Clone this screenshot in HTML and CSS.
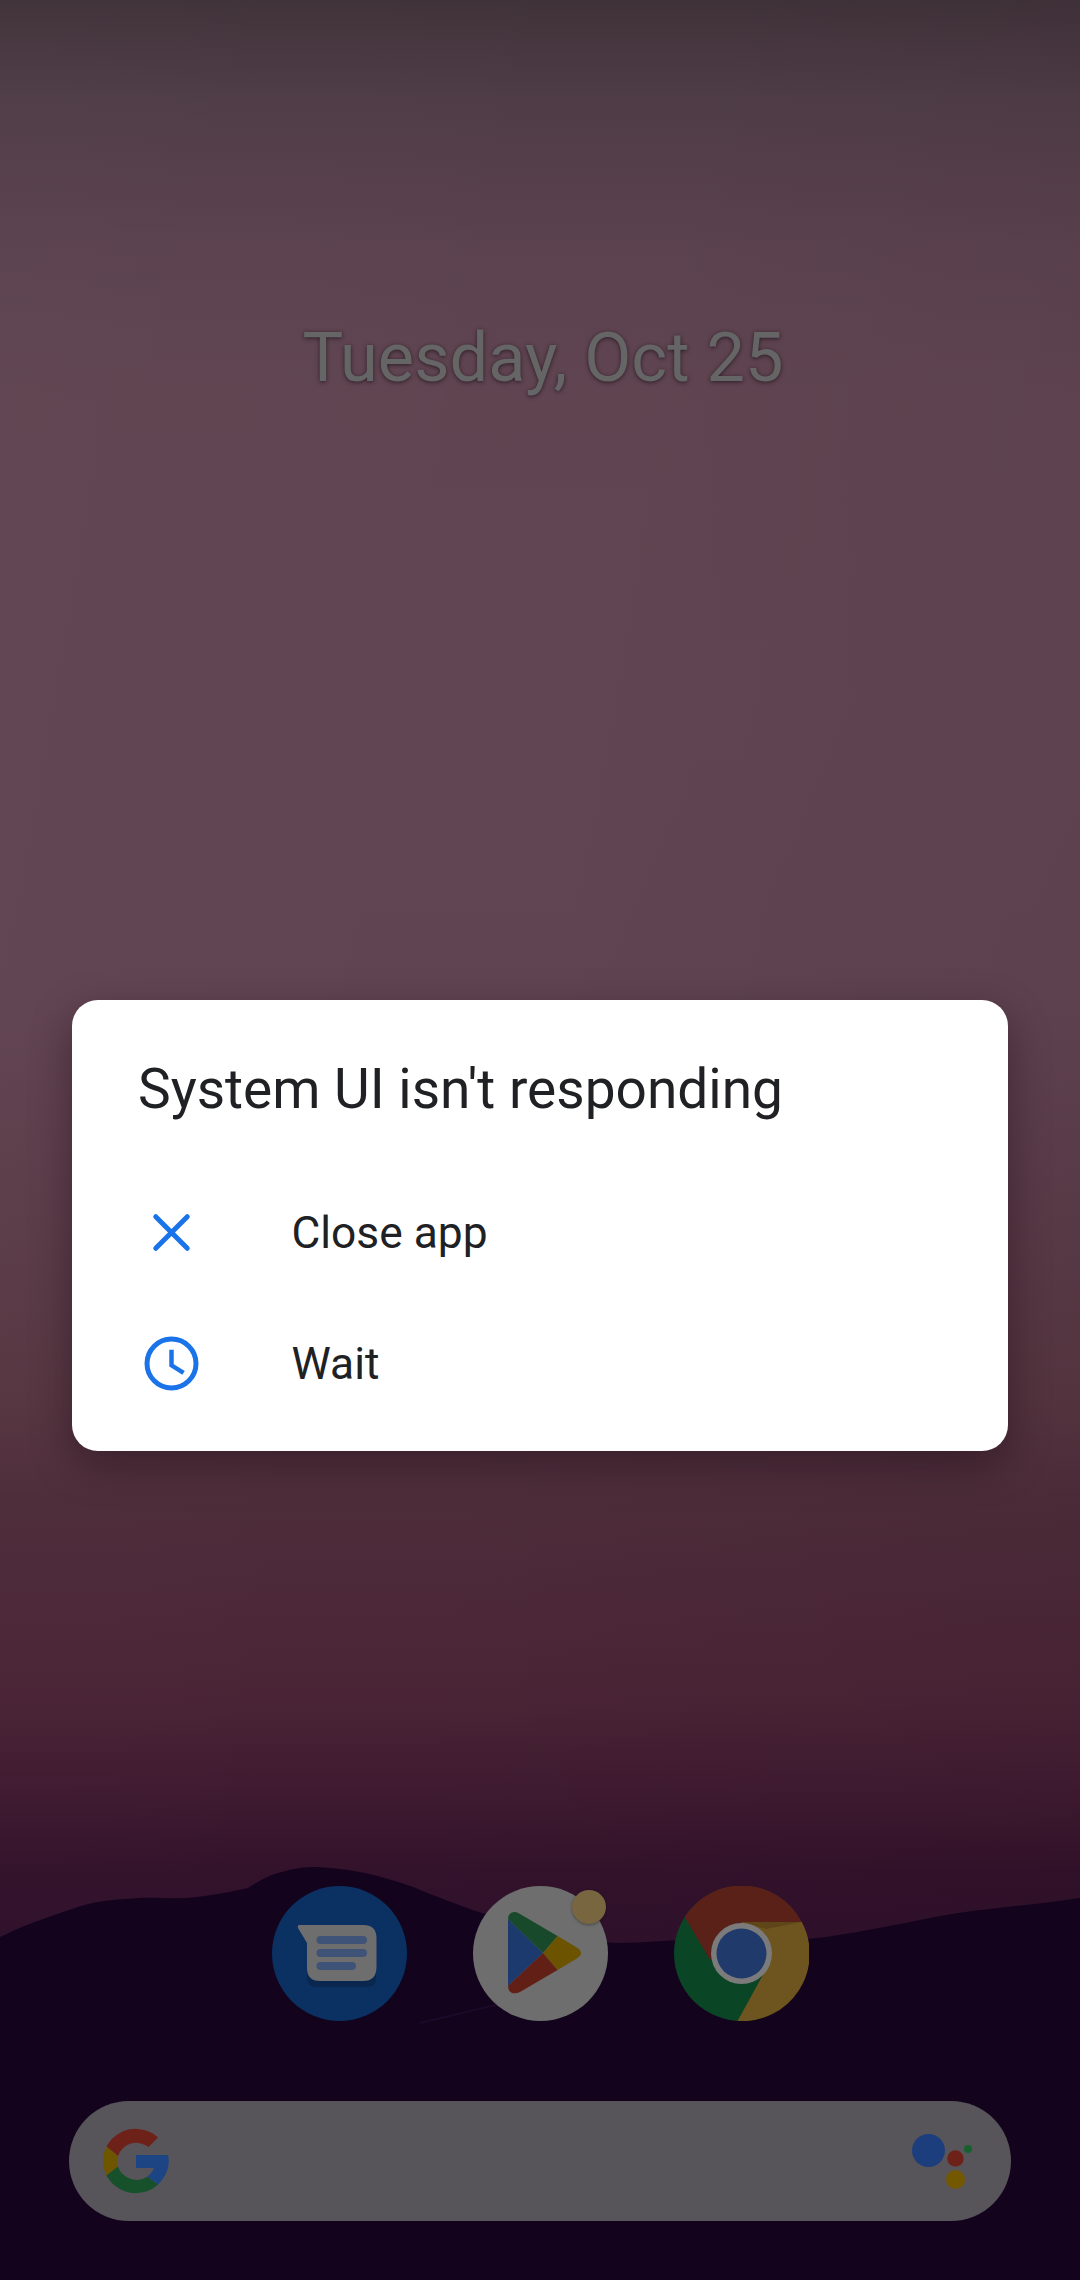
FILE: index.html
```html
<!DOCTYPE html>
<html lang="en">
<head>
<meta charset="utf-8">
<title>System UI isn't responding</title>
<link rel="stylesheet" href="styles.css">
</head>
<body>
<main class="screen">
  <svg class="mountains" viewBox="0 -10 1080 420" aria-hidden="true">
    <path class="mountain-fill" d="M0 67 C25 55 45 48 69 40 C95 30 115 30 138 28 C155 27 170 29 186 28 C210 26 230 22 248 18 C260 10 272 4 282 2 C295 -2 305 -3 317 -3 C335 -2 350 0 365 3 C385 8 400 12 413 17 C435 26 460 36 482 43 C505 50 530 56 551 60 C575 65 600 73 620 73 C645 73 665 70 689 70 C730 69 790 72 826 67 C860 62 895 55 930 48 C980 38 1030 36 1080 28 L1080 420 L0 420 Z"/>
    <path class="ridge" d="M420 153 C445 147 475 140 504 133"/>
  </svg>

  <p class="date">Tuesday, Oct 25</p>

  <section class="dialog">
    <h1 class="dialog-title">System UI isn't responding</h1>
    <div class="dialog-row">
      <svg class="dialog-icon" viewBox="0 0 24 24"><path class="stroke-icon" d="M6 6 18 18M18 6 6 18"/></svg>
      <span class="dialog-label">Close app</span>
    </div>
    <div class="dialog-row">
      <svg class="dialog-icon" viewBox="0 0 24 24"><circle class="clock-ring" cx="12" cy="12" r="9.330"/><path class="clock-hands" d="M12 6.800V12.700L16.600 15.600"/></svg>
      <span class="dialog-label">Wait</span>
    </div>
  </section>

  <div class="dock">
    <svg class="app" viewBox="0 0 135 135" aria-label="Messages">
      <circle class="msg-bg" cx="67.5" cy="67.5" r="67.5"/>
      <path class="msg-shadow" d="M35 45H104V93Q104 101 94 101H45Q35 101 35 91Z"/>
      <path class="msg-bubble" d="M27 39H91Q104.500 39 104.500 52V81Q104.500 95 91 95H48Q35 95 35 82V57L26 42Q25.500 39 27 39Z"/>
      <rect class="msg-line" x="44.500" y="50" width="50.500" height="8" rx="4"/>
      <rect class="msg-line" x="44.500" y="63" width="50.500" height="8" rx="4"/>
      <rect class="msg-line" x="44.500" y="76" width="39.500" height="8" rx="4"/>
    </svg>
    <div class="app-wrap">
      <svg class="app" viewBox="0 0 135 135" aria-label="Play Store">
        <circle class="play-bg" cx="67.500" cy="67.500" r="67.500"/>
        <g transform="translate(1 0)">
          <path class="play-blue" d="M34 33V100L69 67Z"/>
          <path class="play-green" d="M34 33Q34 28 38 26.500Q42 25 46 28L83.500 50L69 67Z"/>
          <path class="play-yellow" d="M83.500 50L102 61Q107 64 107 67Q107 70 102 73L83.500 84L69 67Z"/>
          <path class="play-red" d="M34 100Q34 105 38 107Q42 108 46 106L83.500 84L69 67Z"/>
        </g>
      </svg>
      <span class="badge"></span>
    </div>
    <svg class="app" viewBox="0 0 135 135" aria-label="Chrome">
      <circle class="chrome-green" cx="67.500" cy="67.500" r="67.500"/>
      <path class="chrome-red" d="M10.700 31A67.500 67.500 0 0 1 127.800 36H67.500L36 74Z"/>
      <path class="chrome-yellow" d="M67.500 36H127.800A67.500 67.500 0 0 1 63.500 135L90 87Z"/>
      <path class="chrome-fold" d="M67.500 36H127.800L92 43Z"/>
      <circle class="chrome-ring" cx="67.500" cy="67.500" r="30.500"/>
      <circle class="chrome-core" cx="67.500" cy="67.500" r="25"/>
    </svg>
  </div>

  <div class="search">
    <svg class="g-logo" viewBox="0 0 66 66" aria-label="Google">
      <path class="g-red" d="M3.500 18.500A33 33 0 0 1 55 9.500L45.500 19A19.500 19.500 0 0 0 15 28Z"/>
      <path class="g-yellow" d="M3.500 18.500A33 33 0 0 0 3.500 47.500L15 38.500A19.500 19.500 0 0 1 15 28Z"/>
      <path class="g-green" d="M3.500 47.500A33 33 0 0 0 55 56.500L44.500 48.500A19.500 19.500 0 0 1 15 38.500Z"/>
      <path class="g-blue" d="M33 27H65Q66.500 33 65 40Q62 50 55 56.500L44.500 48.500Q49.500 44.500 51 40H33Z"/>
    </svg>
    <svg class="assistant" viewBox="0 0 60 56" aria-label="Google Assistant">
      <circle class="dot-blue" cx="16.500" cy="16.500" r="16.500"/>
      <circle class="dot-red" cx="43.500" cy="24.500" r="8.200"/>
      <circle class="dot-yellow" cx="43.500" cy="45.500" r="9.500"/>
      <circle class="dot-green" cx="56" cy="15" r="4"/>
    </svg>
  </div>
</main>
</body>
</html>
```

FILE: styles.css
```css
* { box-sizing: border-box; }

html, body {
  margin: 0;
  padding: 0;
  background: #10021c;
}

.screen {
  position: relative;
  display: flex;
  flex-direction: column;
  width: 1080px;
  height: 2280px;
  overflow: hidden;
  font-family: Roboto, "Noto Sans", sans-serif;
  background:
    linear-gradient(100deg, rgba(255, 255, 255, 0.012) 0, rgba(0, 0, 0, 0) 45%, rgba(20, 0, 15, 0.07) 100%),
    linear-gradient(180deg,
      #403239 0,
      #4f3c46 100px,
      #5b424e 250px,
      #604551 400px,
      #614452 1000px,
      #563641 1400px,
      #4e2d3a 1500px,
      #4a2436 1700px,
      #3e1a30 1800px,
      #33122b 1870px,
      #2c0f2c 2000px);
}

.mountains {
  position: absolute;
  left: 0;
  top: 1860px;
  width: 1080px;
  height: 420px;
}

.mountain-fill { fill: #13031d; }

.ridge {
  fill: none;
  stroke: #1d0929;
  stroke-width: 2;
}

.date {
  position: relative;
  margin: 321px 0 0;
  padding-left: 6px;
  height: 74px;
  font-size: 68.5px;
  line-height: 74px;
  text-align: center;
  color: #656565;
  text-shadow: 0 1px 4px rgba(30, 18, 26, 0.8);
}

.dialog {
  position: relative;
  display: flex;
  flex-direction: column;
  width: 936px;
  height: 451px;
  margin: 605px 0 0 72px;
  padding: 56px 0 0 66px;
  background: #fff;
  border-radius: 26px;
  box-shadow: 0 14px 42px rgba(20, 5, 15, 0.4);
}

.dialog-title {
  margin: 0 0 45px;
  font-size: 55px;
  font-weight: 400;
  line-height: 66px;
  color: #202124;
}

.dialog-row {
  display: flex;
  align-items: center;
  height: 131px;
  gap: 89px;
}

.dialog-icon {
  flex: none;
  width: 63px;
  height: 63px;
  margin-left: 1.5px;
}

.dialog-label {
  font-size: 44.3px;
  line-height: 56px;
  color: #202124;
}

.stroke-icon, .clock-ring, .clock-hands {
  fill: none;
  stroke: #1a73e8;
}

.stroke-icon {
  stroke-width: 1.9;
  stroke-linecap: round;
}

.clock-ring { stroke-width: 1.9; }
.clock-hands { stroke-width: 1.7; }

.dock {
  position: relative;
  display: flex;
  gap: 66px;
  margin: 435px 0 0 272px;
}

.app-wrap {
  position: relative;
  width: 135px;
  height: 135px;
}

.app {
  display: block;
  width: 135px;
  height: 135px;
}

.badge {
  position: absolute;
  top: 4px;
  right: 2px;
  width: 34px;
  height: 34px;
  border-radius: 50%;
  background: #786640;
  box-shadow: 0 1px 3px rgba(0, 0, 0, 0.35);
}

.msg-bg { fill: #0a3161; }
.msg-shadow { fill: #0a2750; }
.msg-bubble { fill: #6e6e6e; }
.msg-line { fill: #3f5378; }

.play-bg { fill: #6e6e6e; }
.play-blue { fill: #1c3a6e; }
.play-green { fill: #17492a; }
.play-yellow { fill: #6b5300; }
.play-red { fill: #621f16; }

.chrome-green { fill: #0a4525; }
.chrome-red { fill: #5a2119; }
.chrome-yellow { fill: #6e5520; }
.chrome-fold { fill: #5f4618; }
.chrome-ring { fill: #7b7b7b; }
.chrome-core { fill: #1f3a6b; }

.search {
  position: relative;
  display: flex;
  align-items: flex-start;
  justify-content: space-between;
  width: 942px;
  height: 120px;
  margin: 80px 0 0 69px;
  padding: 27px 39px 0 34px;
  background: #57555a;
  border-radius: 60px;
}

.g-logo {
  flex: none;
  width: 66px;
  height: 66px;
}

.assistant {
  flex: none;
  width: 60px;
  height: 56px;
  margin-top: 6px;
}

.g-red { fill: #6e2118; }
.g-yellow { fill: #6e5500; }
.g-green { fill: #17512b; }
.g-blue { fill: #1d4583; }
.dot-blue { fill: #1c3e7c; }
.dot-red { fill: #6e2118; }
.dot-yellow { fill: #745800; }
.dot-green { fill: #17612f; }
```
